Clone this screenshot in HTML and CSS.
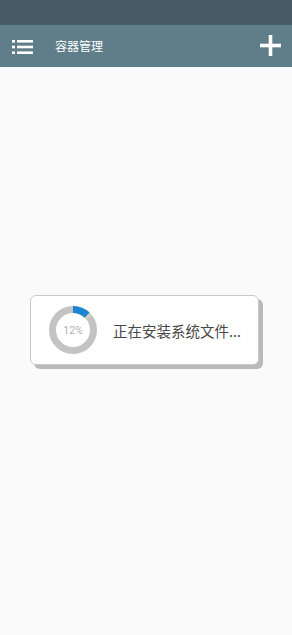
FILE: index.html
```html
<!DOCTYPE html>
<html lang="zh">
<head>
<meta charset="utf-8">
<link rel="stylesheet" href="styles.css">
</head>
<body>
<div class="statusbar"></div>
<header class="toolbar">
  <svg class="menu-icon" width="21" height="16" viewBox="0 0 21 16">
    <rect x="0" y="1" width="3" height="2.6" fill="#fff"/>
    <rect x="5" y="1" width="16" height="2.6" fill="#fff"/>
    <rect x="0" y="6.7" width="3" height="2.6" fill="#fff"/>
    <rect x="5" y="6.7" width="16" height="2.6" fill="#fff"/>
    <rect x="0" y="12.4" width="3" height="2.6" fill="#fff"/>
    <rect x="5" y="12.4" width="16" height="2.6" fill="#fff"/>
  </svg>
  <h1 class="title">容器管理</h1>
  <svg class="add-icon" width="21" height="21" viewBox="0 0 21 21">
    <rect x="8.7" y="0" width="3.6" height="21" fill="#fff"/>
    <rect x="0" y="8.7" width="21" height="3.6" fill="#fff"/>
  </svg>
</header>
<main class="content">
  <div class="dialog">
    <div class="ring">
      <svg width="48" height="48" viewBox="0 0 48 48">
        <circle cx="24" cy="24" r="20.5" fill="none" stroke="#c3c3c3" stroke-width="7"/>
        <circle cx="24" cy="24" r="20.5" fill="none" stroke="#d9cfc2" stroke-width="7"
          stroke-dasharray="18.5 200" transform="rotate(-90 24 24)"/>
        <circle cx="24" cy="24" r="20.5" fill="none" stroke="#1b87d2" stroke-width="7"
          stroke-dasharray="15.5 200" transform="rotate(-90 24 24)"/>
      </svg>
      <span class="pct">12%</span>
    </div>
    <span class="msg">正在安装系统文件...</span>
  </div>
</main>
</body>
</html>
```
FILE: styles.css
```css
html, body {
  margin: 0;
  padding: 0;
}
body {
  width: 292px;
  height: 635px;
  background: #fafafa;
  font-family: "Noto Sans CJK SC", "Noto Sans", sans-serif;
  overflow: hidden;
}
.statusbar {
  height: 25px;
  background: #475b66;
}
.toolbar {
  height: 42px;
  background: #607d8a;
  display: flex;
  align-items: center;
  padding: 0 11px 0 12px;
}
.menu-icon {
  display: block;
  margin-top: 1px;
}
.title {
  margin: 0 0 0 22px;
  font-size: 12px;
  font-weight: normal;
  color: #fff;
  line-height: 1;
  flex: 1;
}
.add-icon {
  display: block;
  margin-top: -2px;
}
.content {
  padding-top: 228px;
}
.dialog {
  margin-left: 30px;
  width: 209px;
  height: 68px;
  border: 1px solid #c9c9c9;
  border-radius: 6px;
  background: #fff;
  box-shadow: 4px 4px 0 #b9b9b9;
  display: flex;
  align-items: center;
  padding-left: 18px;
  box-sizing: content-box;
}
.ring {
  position: relative;
  width: 48px;
  height: 48px;
  flex: none;
}
.ring svg {
  display: block;
}
.pct {
  position: absolute;
  inset: 0;
  display: flex;
  align-items: center;
  justify-content: center;
  font-family: "Roboto", "Noto Sans", sans-serif;
  font-size: 10.5px;
  color: #b0b0b0;
}
.msg {
  margin-left: 16px;
  font-size: 14.5px;
  color: #484848;
  white-space: nowrap;
}
```
